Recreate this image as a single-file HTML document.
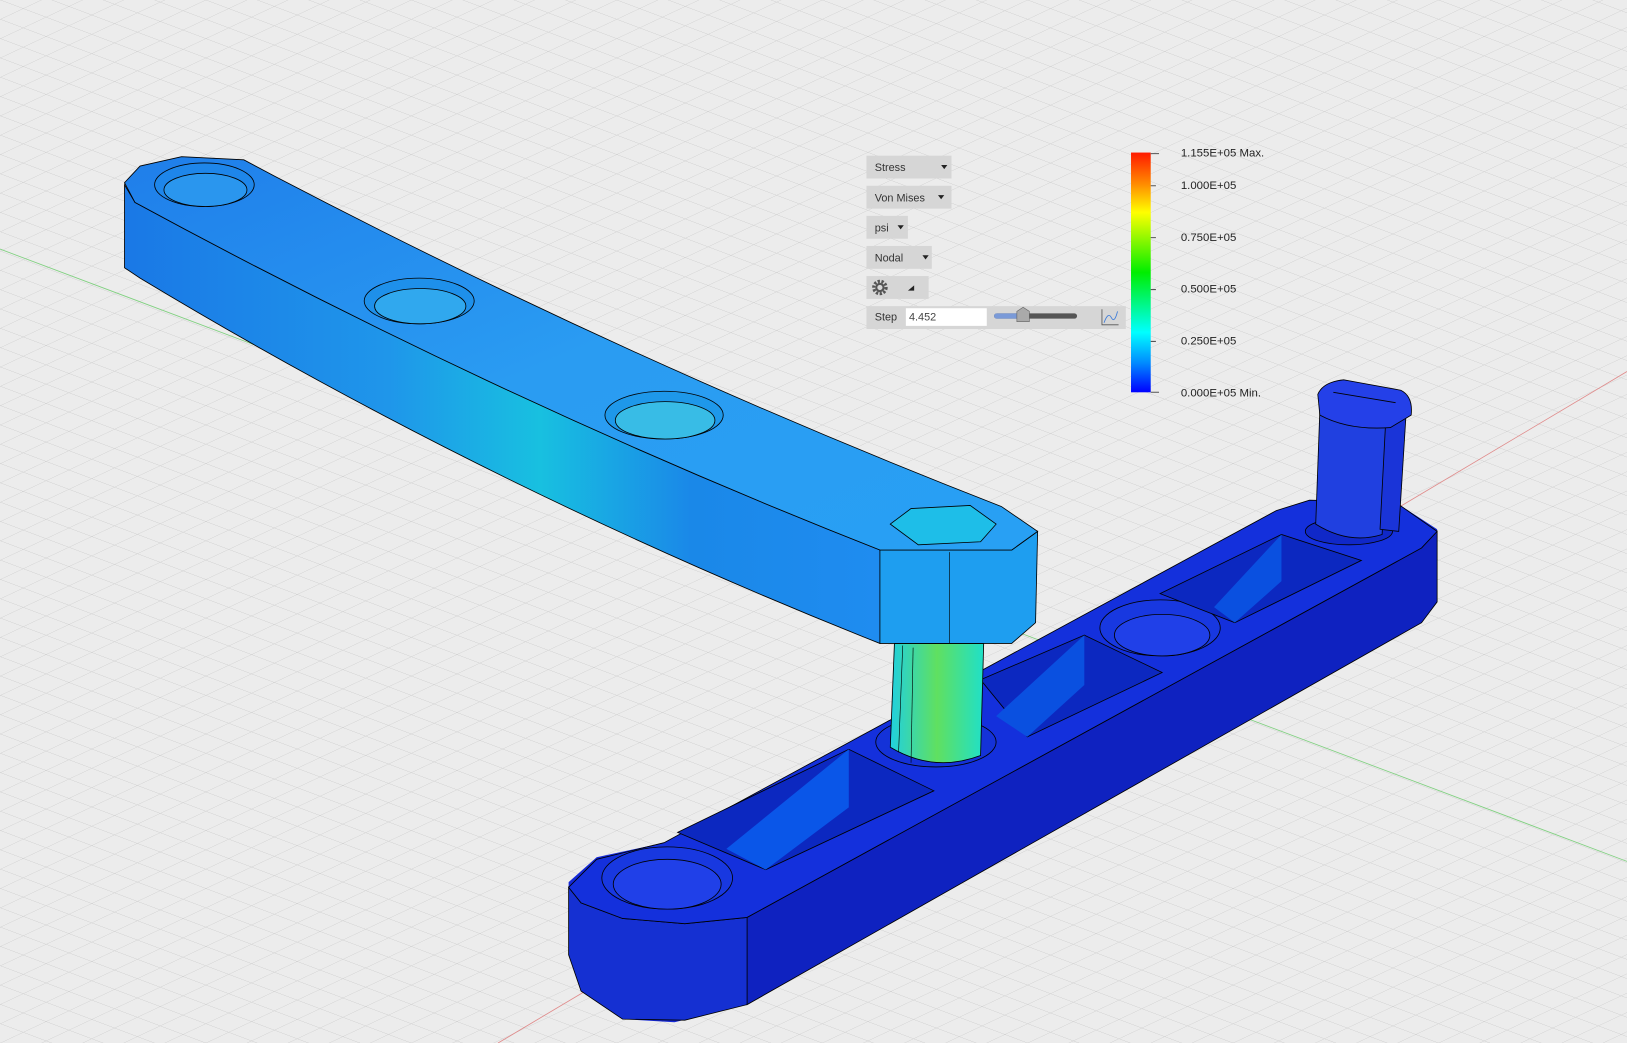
<!DOCTYPE html>
<html><head><meta charset="utf-8"><style>
html,body{margin:0;padding:0;background:#ececec;overflow:hidden}
svg{display:block}
text{font-family:"Liberation Sans",sans-serif}
</style></head><body>
<svg width="1627" height="1043" viewBox="0 0 1568 1005" preserveAspectRatio="none" xmlns="http://www.w3.org/2000/svg">
<defs>
<pattern id="g" width="22" height="22" patternUnits="userSpaceOnUse" patternTransform="matrix(1,0.376,1,-0.47,0,0)">
<rect width="22" height="22" fill="#ececec"/>
<path d="M0 0H22M0 0V22" stroke="#cacaca" stroke-width="0.8" fill="none"/>
</pattern>
<linearGradient id="leg" x1="0" y1="0" x2="0" y2="1">
<stop offset="0" stop-color="#ff1a00"/><stop offset="0.13" stop-color="#ff8a00"/><stop offset="0.25" stop-color="#ffff00"/><stop offset="0.5" stop-color="#00ee00"/><stop offset="0.75" stop-color="#00ffff"/><stop offset="0.88" stop-color="#0088ff"/><stop offset="1" stop-color="#0000ff"/>
</linearGradient>
<linearGradient id="topA" x1="0" y1="0" x2="1" y2="1">
<stop offset="0" stop-color="#1f7eea"/><stop offset="0.5" stop-color="#2a9cf2"/><stop offset="1" stop-color="#28a0f4"/>
</linearGradient>
<linearGradient id="sideA" x1="0" y1="0" x2="1" y2="0">
<stop offset="0" stop-color="#1a78e6"/><stop offset="0.35" stop-color="#1f96ea"/><stop offset="0.55" stop-color="#18c0e0"/><stop offset="0.75" stop-color="#1a88e8"/><stop offset="1" stop-color="#1f8cf0"/>
</linearGradient>
<linearGradient id="pin" x1="0" y1="0" x2="1" y2="0">
<stop offset="0" stop-color="#20d0e0"/><stop offset="0.5" stop-color="#60e060"/><stop offset="1" stop-color="#20e0c8"/>
</linearGradient>
</defs>
<rect width="1568" height="1005" fill="url(#g)"/>
<line x1="0" y1="240" x2="1568" y2="830" stroke="#7fd07f" stroke-width="0.8"/>
<line x1="480" y1="1005" x2="1568" y2="358" stroke="#e08a8a" stroke-width="0.8"/>

<!-- bottom bar -->
<path d="M548 850 L575 826 L640 812 L1230 492 L1262 482 L1345 484 L1385 510 L1385 580 L1370 600 L720 968 L650 985 L600 982 L560 955 L548 920 Z" fill="#1428d6"/>
<path d="M720 884 L1370 528 L1385 512 L1385 580 L1370 600 L720 968 Z" fill="#0f22c0" stroke="#000" stroke-width="0.8"/>
<path d="M548 855 L560 870 L600 885 L660 890 L720 884 L720 968 L660 983 L600 982 L560 955 L548 920 Z" fill="#1530d2" stroke="#000" stroke-width="0.8"/>
<path d="M548 855 L575 828 L640 812 L1230 492 L1262 482 L1345 484 L1385 512 L1370 528 L720 884 L660 890 L600 885 L560 870 Z" fill="#1430dc" stroke="#000" stroke-width="0.8"/>
<ellipse cx="643" cy="846" rx="63" ry="30" fill="#1838e0" stroke="#000" stroke-width="0.8"/>
<ellipse cx="643" cy="852" rx="52" ry="24" fill="#2040e8" stroke="#000" stroke-width="0.8"/>
<path d="M653 802 L818 722 L900 762 L738 838 Z" fill="#0c28c0" stroke="#000" stroke-width="0.8"/>
<path d="M700 818 L818 722 L818 778 L738 838 Z" fill="#0a56e8"/>
<path d="M945 655 L1045 612 L1120 648 L990 710 Z" fill="#0c28c0" stroke="#000" stroke-width="0.8"/>
<path d="M960 690 L1045 612 L1045 660 L990 710 Z" fill="#0a50e0"/>
<ellipse cx="1118" cy="605" rx="58" ry="27" fill="#1838e0" stroke="#000" stroke-width="0.8"/>
<ellipse cx="1120" cy="612" rx="46" ry="20" fill="#2040e8" stroke="#000" stroke-width="0.8"/>
<path d="M1118 572 L1235 515 L1312 540 L1190 600 Z" fill="#0c28c0" stroke="#000" stroke-width="0.8"/>
<path d="M1170 585 L1235 515 L1235 560 L1190 600 Z" fill="#0a50e0"/>
<!-- post -->
<ellipse cx="1300" cy="512" rx="42" ry="13" fill="#1028c8" stroke="#000" stroke-width="0.8"/>
<path d="M1272 395 L1268 505 Q1300 525 1332 515 L1338 395 Z" fill="#2040e0" stroke="#000" stroke-width="0.8"/>
<path d="M1336 395 L1330 510 L1348 512 L1355 400 Z" fill="#1a34d8" stroke="#000" stroke-width="0.8"/>
<path d="M1270 380 Q1275 368 1295 366 L1350 376 Q1362 382 1360 400 L1340 412 Q1300 415 1272 400 Z" fill="#2440e8" stroke="#000" stroke-width="0.8"/>
<path d="M1285 378 L1345 388" stroke="#000" stroke-width="0.8"/>
<!-- pin -->
<ellipse cx="902" cy="715" rx="58" ry="24" fill="#1432d8" stroke="#000" stroke-width="0.8"/>
<path d="M862 620 L858 720 Q900 745 945 728 L948 620 Z" fill="url(#pin)" stroke="#000" stroke-width="0.8"/>
<path d="M870 622 L866 725" stroke="#000" stroke-width="0.6"/>
<path d="M880 624 L878 735" stroke="#000" stroke-width="0.6"/>
<!-- top bar -->
<path d="M120 178 L130 195 Q480 385 848 530 L848 620 Q470 470 135 268 L120 258 Z" fill="url(#sideA)" stroke="#000" stroke-width="0.8"/>
<path d="M848 530 L975 530 L1000 512 L998 600 L975 620 L848 620 Z" fill="#1e9ef0" stroke="#000" stroke-width="0.8"/>
<path d="M120 176 L135 160 L175 151 L235 154 L265 170 Q610 350 965 488 L1000 512 L975 530 L848 530 Q480 385 130 195 Z" fill="url(#topA)" stroke="#000" stroke-width="0.8"/>
<line x1="915" y1="532" x2="915" y2="620" stroke="#000" stroke-width="0.6"/>
<ellipse cx="197" cy="178" rx="48" ry="21" fill="#1e86ea" stroke="#000" stroke-width="0.8"/>
<ellipse cx="198" cy="183" rx="40" ry="16" fill="#2a96ee" stroke="#000" stroke-width="0.8"/>
<ellipse cx="404" cy="290" rx="53" ry="22" fill="#1e90ea" stroke="#000" stroke-width="0.8"/>
<ellipse cx="405" cy="295" rx="44" ry="17" fill="#30a8ee" stroke="#000" stroke-width="0.8"/>
<ellipse cx="640" cy="400" rx="57" ry="23" fill="#1e98ea" stroke="#000" stroke-width="0.8"/>
<ellipse cx="641" cy="405" rx="48" ry="18" fill="#38bce6" stroke="#000" stroke-width="0.8"/>
<path d="M858 505 L878 490 L935 487 L960 505 L945 522 L885 525 Z" fill="#1ebee8" stroke="#000" stroke-width="0.8"/>

<!-- controls -->
<g font-size="10.5" fill="#333">
<rect x="835" y="150" width="82" height="22" fill="#d6d6d6"/><text x="843" y="165">Stress</text><path d="M907 159h6l-3 4z" fill="#222"/>
<rect x="835" y="179" width="82" height="22" fill="#d6d6d6"/><text x="843" y="194">Von Mises</text><path d="M904 188h6l-3 4z" fill="#222"/>
<rect x="835" y="208" width="40" height="22" fill="#d6d6d6"/><text x="843" y="223">psi</text><path d="M865 217h6l-3 4z" fill="#222"/>
<rect x="835" y="237" width="63" height="22" fill="#d6d6d6"/><text x="843" y="252">Nodal</text><path d="M889 246h6l-3 4z" fill="#222"/>
<rect x="835" y="266" width="60" height="22" fill="#d6d6d6"/>
<circle cx="848" cy="277" r="6" fill="none" stroke="#555" stroke-width="3" stroke-dasharray="2.2 1.5"/><circle cx="848" cy="277" r="3.5" fill="none" stroke="#555" stroke-width="2"/>
<path d="M875 280h6v-5z" fill="#222"/>
<rect x="835" y="295" width="250" height="22" fill="#d6d6d6"/><text x="843" y="309">Step</text>
<rect x="873" y="297" width="78" height="17" fill="#fff"/><text x="876" y="309" fill="#444">4.452</text>
<rect x="958" y="302" width="80" height="5" rx="2.5" fill="#555"/><rect x="958" y="302" width="28" height="5" rx="2.5" fill="#7a9ad8"/>
<path d="M980 300 L986 296 L992 300 L992 310 L980 310 Z" fill="#aaa" stroke="#666" stroke-width="0.6"/>
<path d="M1062 298V313H1078" fill="none" stroke="#555" stroke-width="0.8"/><path d="M1064 311 Q1068 300 1071 306 T1077 300" fill="none" stroke="#3a7ad8" stroke-width="0.8"/>
</g>
<!-- legend -->
<rect x="1090" y="147" width="19" height="231" fill="url(#leg)"/>
<g stroke="#555" stroke-width="1">
<path d="M1109 148h8M1109 179h5M1109 229h5M1109 279h5M1109 329h5M1109 378h8"/>
</g>
<g font-size="11" fill="#222">
<text x="1138" y="151">1.155E+05 Max.</text>
<text x="1138" y="182">1.000E+05</text>
<text x="1138" y="232">0.750E+05</text>
<text x="1138" y="282">0.500E+05</text>
<text x="1138" y="332">0.250E+05</text>
<text x="1138" y="382">0.000E+05 Min.</text>
</g>
</svg>
</body></html>
